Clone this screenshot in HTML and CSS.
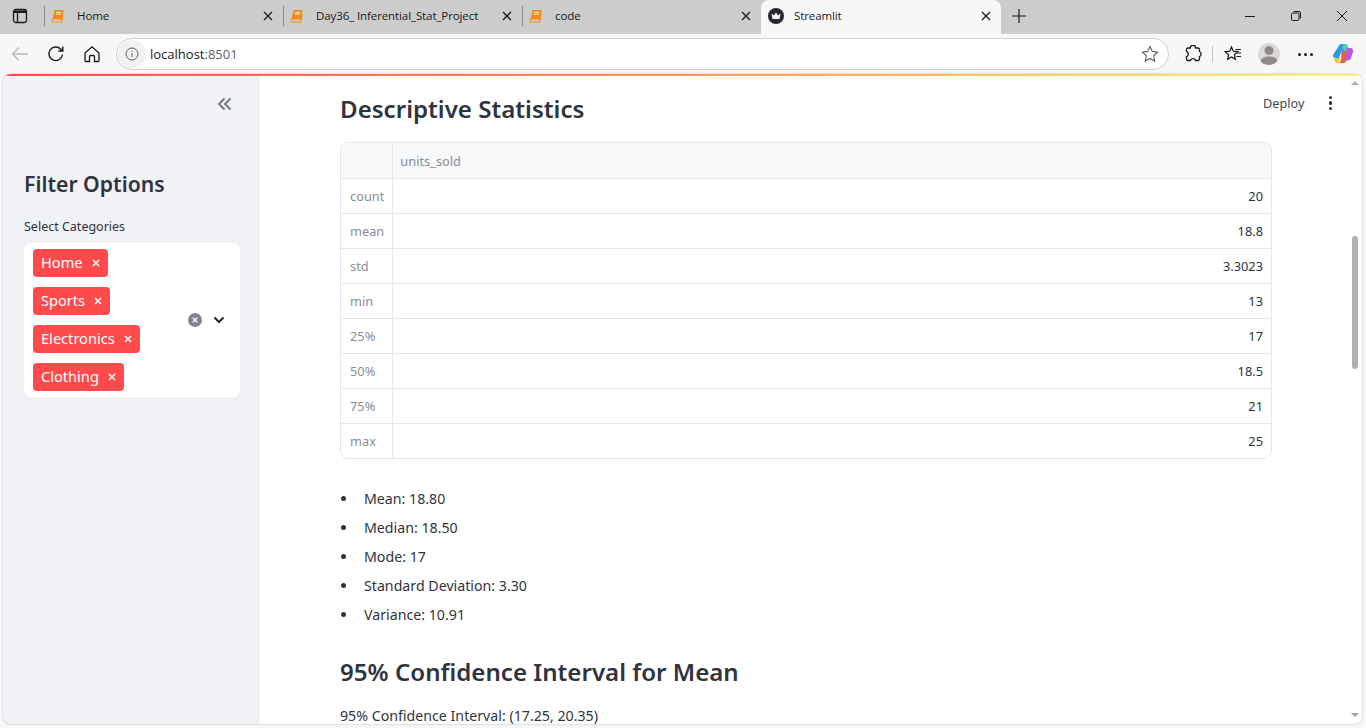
FILE: index.html
```html
<!DOCTYPE html>
<html lang="en">
<head>
    <meta charset="UTF-8">
    <meta name="viewport" content="width=device-width, initial-scale=1.0">
    <title>Streamlit</title>
    <link rel="stylesheet" href="styles.css">
</head>
<body>
    <div class="tabstrip">
        <svg class="tab-panel-icon" width="16" height="16" viewBox="0 0 16 16" fill="none" stroke="#1a1a1a" stroke-width="1.3"><rect x="1.5" y="1.5" width="13" height="13" rx="2.5"/><path d="M5.5 5v9.500"/><path d="M2 2.500h12v2.500H2z" fill="#1a1a1a" stroke="none"/></svg>
        <div class="tab">
            <svg class="book" width="14" height="14" viewBox="0 0 14 14" fill="none"><path d="M3.600 1h9.200L10.800 10.600H1.400z" fill="#f28a14"/><path d="M1.400 10.600c-.8 1.400-.2 2.400 1 2.400h8.200l1.600-7.600" stroke="#f28a14" stroke-width="1.100"/><path d="M5.200 3.400h5M4.800 5.200h5" stroke="#fff" stroke-width=".9"/></svg>
            <span class="tab-title">Home</span>
            <svg class="tab-x" width="10" height="10" viewBox="0 0 10 10" stroke="#1a1a1a" stroke-width="1.300"><path d="M1 1l8 8M9 1L1 9"/></svg>
        </div>
        <div class="tab">
            <svg class="book" width="14" height="14" viewBox="0 0 14 14" fill="none"><path d="M3.600 1h9.200L10.800 10.600H1.400z" fill="#f28a14"/><path d="M1.400 10.600c-.8 1.400-.2 2.400 1 2.400h8.200l1.600-7.600" stroke="#f28a14" stroke-width="1.100"/><path d="M5.200 3.400h5M4.800 5.200h5" stroke="#fff" stroke-width=".9"/></svg>
            <span class="tab-title">Day36_ Inferential_Stat_Project</span>
            <svg class="tab-x" width="10" height="10" viewBox="0 0 10 10" stroke="#1a1a1a" stroke-width="1.300"><path d="M1 1l8 8M9 1L1 9"/></svg>
        </div>
        <div class="tab">
            <svg class="book" width="14" height="14" viewBox="0 0 14 14" fill="none"><path d="M3.600 1h9.200L10.800 10.600H1.400z" fill="#f28a14"/><path d="M1.400 10.600c-.8 1.400-.2 2.400 1 2.400h8.200l1.600-7.600" stroke="#f28a14" stroke-width="1.100"/><path d="M5.200 3.400h5M4.800 5.200h5" stroke="#fff" stroke-width=".9"/></svg>
            <span class="tab-title">code</span>
            <svg class="tab-x" width="10" height="10" viewBox="0 0 10 10" stroke="#1a1a1a" stroke-width="1.300"><path d="M1 1l8 8M9 1L1 9"/></svg>
        </div>
        <div class="tab tab-active">
            <svg class="crown" width="16" height="16" viewBox="0 0 16 16"><circle cx="8" cy="8" r="8" fill="#262730"/><path d="M3.500 5.500l2.500 2L8 4.500l2 3 2.500-2-1 5.500h-7z" fill="#fff"/></svg>
            <span class="tab-title">Streamlit</span>
            <svg class="tab-x" width="10" height="10" viewBox="0 0 10 10" stroke="#1a1a1a" stroke-width="1.300"><path d="M1 1l8 8M9 1L1 9"/></svg>
        </div>
        <svg class="new-tab" width="16" height="16" viewBox="0 0 16 16" stroke="#1a1a1a" stroke-width="1.200"><path d="M8 1v14M1 8h14"/></svg>
        <div class="win-buttons">
            <svg width="12" height="12" viewBox="0 0 12 12" stroke="#1a1a1a" fill="none"><path d="M1 6.500h10"/></svg>
            <svg width="12" height="12" viewBox="0 0 12 12" stroke="#1a1a1a" fill="none"><rect x="1.500" y="3" width="7.500" height="7.500" rx="1.500"/><path d="M3.500 1.500h5.500a1.500 1.500 0 0 1 1.500 1.500v5.500"/></svg>
            <svg width="12" height="12" viewBox="0 0 12 12" stroke="#1a1a1a" fill="none"><path d="M1 1l10 10M11 1L1 11"/></svg>
        </div>
    </div>

    <div class="toolbar">
        <svg class="tool tool-back" width="18" height="18" viewBox="0 0 18 18" fill="none" stroke="#b9b9b9" stroke-width="1.300"><path d="M17 9H1.500M8 2.500L1.500 9 8 15.500"/></svg>
        <svg class="tool" width="18" height="18" viewBox="0 0 18 18" fill="none" stroke="#1a1a1a" stroke-width="1.400"><path d="M15.500 9.500A6.800 6.800 0 1 1 13.600 4L15.500 6"/><path d="M15.800 1.500V6h-4.500"/></svg>
        <svg class="tool" width="18" height="18" viewBox="0 0 18 18" fill="none" stroke="#1a1a1a" stroke-width="1.300"><path d="M2 8l7-6.200L16 8v7.500a1 1 0 0 1-1 1h-3.500v-5a1 1 0 0 0-1-1h-3a1 1 0 0 0-1 1v5H3a1 1 0 0 1-1-1z"/></svg>
        <div class="urlbar">
            <span class="url-info"><svg width="14" height="14" viewBox="0 0 14 14" fill="none" stroke="#5f5f5f" stroke-width="1"><circle cx="7" cy="7" r="6"/><path d="M7 6v4M7 3.800v1.100"/></svg></span>
            <span class="url-text">localhost<span class="url-port">:8501</span></span>
            <svg class="url-star" width="18" height="18" viewBox="0 0 18 18" fill="none" stroke="#5f5f5f" stroke-width="1.100"><path d="M9 1.500l2.300 4.900 5.300.7-3.900 3.700 1 5.300L9 13.500l-4.700 2.600 1-5.300-3.900-3.700 5.300-.7z"/></svg>
        </div>
        <svg class="tool tool-ext" width="18" height="18" viewBox="0 0 18 18" fill="none" stroke="#1a1a1a" stroke-width="1.300"><path d="M6.300 3a2.700 2.700 0 0 1 5.400 0H14a1.500 1.500 0 0 1 1.500 1.500v2a2.700 2.700 0 0 1 0 5V14a1.500 1.500 0 0 1-1.500 1.500h-2.500a2.600 2.600 0 0 0-5 0H4A1.500 1.500 0 0 1 2.500 14v-2.500a2.600 2.600 0 0 0 0-5v-2A1.500 1.500 0 0 1 4 3z"/></svg>
        <span class="tool-sep"></span>
        <svg class="tool tool-fav" width="18" height="18" viewBox="0 0 18 18" fill="none" stroke="#1a1a1a" stroke-width="1.200"><path d="M7.500 2l1.800 4.200 4.500.5-3.400 3 1 4.600-3.900-2.400-3.900 2.400 1-4.600-3.400-3 4.500-.5z"/><path d="M11.500 4.500H17M13.500 8H17M12.500 11.500H17"/></svg>
        <span class="avatar"><svg width="22" height="22" viewBox="0 0 22 22" fill="#8f8b87"><circle cx="11" cy="7.500" r="4.500"/><path d="M2.500 19c0-3.500 3.500-5.500 8.500-5.500s8.500 2 8.500 5.500c-2 1.800-5 3-8.500 3s-6.500-1.200-8.500-3z"/></svg></span>
        <span class="more-dots"><i></i><i></i><i></i></span>
        <svg class="copilot" width="22" height="22" viewBox="0 0 22 22">
            <path d="M8 1h5c1.500 0 2.400 1 2.800 2.400L17 8H9.500L7 15H3.500C1.500 15 .5 13.500 1 12z" fill="#2b9de8"/>
            <path d="M13 1c1.500 0 2.400 1 2.800 2.400L17 8h-5L10.500 4C10 2.500 11.500 1 13 1z" fill="#4fd0b0"/>
            <path d="M9.500 8H17l-2.500 9c-.5 1.800-1.500 3-3.500 3H6c2 0 2.500-1.500 3-3z" fill="#f0642c"/>
            <path d="M14.500 5h4c2 0 3.200 1.800 2.600 3.800L19 15c-.5 1.500-1.500 2.500-3.500 2.500H12l2-6z" fill="#b45ce0"/>
            <path d="M3 15h5l-1.500 4.500c-.2.400-.6.500-1 .5C3 20 1.500 17.500 3 15z" fill="#f2c230"/>
        </svg>
    </div>

    <div class="viewport">
        <div class="page">
            <aside class="sidebar">
                <div class="collapse-row">
                    <svg width="15" height="14" viewBox="0 0 15 14" fill="none" stroke="#6f7380" stroke-width="1.800"><path d="M7.500 1.500L2 7l5.500 5.500M13.500 1.500L8 7l5.500 5.500"/></svg>
                </div>
                <h2 class="side-title">Filter Options</h2>
                <label class="field-label">Select Categories</label>
                <div class="multiselect">
                    <div class="chips">
                        <span class="chip">Home<svg class="chip-x" width="8" height="8" viewBox="0 0 8 8" stroke="#fff" stroke-width="1.500"><path d="M1 1l6 6M7 1L1 7"/></svg></span>
                        <span class="chip">Sports<svg class="chip-x" width="8" height="8" viewBox="0 0 8 8" stroke="#fff" stroke-width="1.500"><path d="M1 1l6 6M7 1L1 7"/></svg></span>
                        <span class="chip">Electronics<svg class="chip-x" width="8" height="8" viewBox="0 0 8 8" stroke="#fff" stroke-width="1.500"><path d="M1 1l6 6M7 1L1 7"/></svg></span>
                        <span class="chip">Clothing<svg class="chip-x" width="8" height="8" viewBox="0 0 8 8" stroke="#fff" stroke-width="1.500"><path d="M1 1l6 6M7 1L1 7"/></svg></span>
                    </div>
                    <div class="select-icons">
                        <svg width="14" height="14" viewBox="0 0 14 14"><circle cx="7" cy="7" r="7" fill="#84868f"/><path d="M4.800 4.800l4.400 4.400M9.200 4.800l-4.400 4.400" stroke="#fff" stroke-width="1.300"/></svg>
                        <svg width="12" height="8" viewBox="0 0 12 8" fill="none" stroke="#262730" stroke-width="2"><path d="M1.500 1.500L6 6l4.500-4.500"/></svg>
                    </div>
                </div>
            </aside>

            <main class="main">
                <div class="top-actions">
                    <span class="deploy">Deploy</span>
                    <span class="kebab"><i></i><i></i><i></i></span>
                </div>
                <div class="content">
                    <h2 class="heading">Descriptive Statistics</h2>
                    <div class="table-wrap">
                        <table class="stats">
                            <thead><tr><th class="idx"></th><th class="col">units_sold</th></tr></thead>
                            <tbody>
                                <tr><td class="idx">count</td><td>20</td></tr>
                                <tr><td class="idx">mean</td><td>18.8</td></tr>
                                <tr><td class="idx">std</td><td>3.3023</td></tr>
                                <tr><td class="idx">min</td><td>13</td></tr>
                                <tr><td class="idx">25%</td><td>17</td></tr>
                                <tr><td class="idx">50%</td><td>18.5</td></tr>
                                <tr><td class="idx">75%</td><td>21</td></tr>
                                <tr><td class="idx">max</td><td>25</td></tr>
                            </tbody>
                        </table>
                    </div>
                    <ul class="summary">
                        <li>Mean: 18.80</li>
                        <li>Median: 18.50</li>
                        <li>Mode: 17</li>
                        <li>Standard Deviation: 3.30</li>
                        <li>Variance: 10.91</li>
                    </ul>
                    <h2 class="heading heading-ci">95% Confidence Interval for Mean</h2>
                    <p class="ci-text">95% Confidence Interval: (17.25, 20.35)</p>
                </div>
                <div class="scrollbar"><span class="scroll-up"></span><span class="scroll-thumb"></span><span class="scroll-down"></span></div>
            </main>
        </div>
    </div>
</body>
</html>
```
FILE: styles.css
```css
* {
    box-sizing: border-box;
}
html, body {
    margin: 0;
    height: 728px;
    overflow: hidden;
}
body {
    font-family: "Noto Sans", sans-serif;
    background-color: #f7f7f7;
    color: #31333f;
}

/* browser chrome */
.tabstrip {
    height: 34px;
    background-color: #cccccc;
    display: flex;
    align-items: center;
    font-family: "Open Sans", sans-serif;
    font-size: 11.5px;
    letter-spacing: -0.1px;
    color: #1a1a1a;
}
.tab-panel-icon {
    margin: 0 16px 2px 12px;
    flex: none;
}
.tab {
    width: 239px;
    height: 34px;
    display: flex;
    align-items: center;
    padding: 0 10px 2px 7px;
    flex: none;
    position: relative;
}
.tab::before {
    content: "";
    position: absolute;
    left: 0;
    top: 6px;
    height: 20px;
    border-left: 1px solid #8a8a8a;
}
.tab .book {
    margin-right: 12px;
    flex: none;
}
.tab-title {
    flex: 1;
    white-space: nowrap;
    margin-bottom: 1px;
}
.tab-x {
    flex: none;
}
.tab-active {
    background-color: #f7f7f7;
    border-radius: 8px 8px 0 0;
    width: 240px;
}
.tab-active::before {
    display: none;
}
.tab-active .crown {
    margin-right: 10px;
}
.new-tab {
    margin: 0 0 2px 10px;
    flex: none;
}
.win-buttons {
    margin: 0 0 2px auto;
    display: flex;
    gap: 34px;
    padding-right: 18px;
}

.toolbar {
    height: 40px;
    display: flex;
    align-items: center;
    background-color: #f7f7f7;
    padding-left: 11px;
}
.tool {
    flex: none;
    margin-right: 18px;
}
.urlbar {
    width: 1053px;
    height: 32px;
    background-color: #fff;
    border: 1px solid #d0d0d0;
    border-radius: 16px;
    display: flex;
    align-items: center;
    margin-left: -3px;
    padding: 0 9px 0 1px;
    font-family: "Open Sans", sans-serif;
    font-size: 13px;
    color: #1a1a1a;
}
.url-info {
    width: 28px;
    height: 28px;
    border-radius: 50%;
    background-color: #f1f1f1;
    display: flex;
    align-items: center;
    justify-content: center;
    margin-right: 4px;
}
.url-port {
    color: #5f6368;
}
.url-star {
    margin-left: auto;
}
.tool-ext {
    margin: 0 0 0 15px;
}
.tool-sep {
    width: 1px;
    height: 16px;
    background-color: #c4c4c4;
    margin: 0 11px 0 10px;
}
.tool-fav {
    margin: 0;
}
.avatar {
    width: 22px;
    height: 22px;
    border-radius: 50%;
    background-color: #dcdad7;
    margin-left: 16px;
    overflow: hidden;
}
.avatar svg {
    display: block;
}
.more-dots {
    display: flex;
    gap: 3px;
    margin-left: 18px;
}
.more-dots i {
    width: 3px;
    height: 3px;
    border-radius: 50%;
    background-color: #1a1a1a;
}
.copilot {
    margin-left: 19px;
}

/* page */
.viewport {
    height: 650px;
    margin: 0 4px 4px 3px;
    padding-top: 2px;
    border-radius: 8px;
    background: linear-gradient(90deg, #ff4b4b, #ff8f5a 45%, #ffd166 80%, #fff27a);
    box-shadow: 0 0 2px rgba(0, 0, 0, 0.3);
    overflow: hidden;
}
.page {
    height: 648px;
    display: flex;
    background-color: #fff;
}
.sidebar {
    width: 257px;
    flex: none;
    background-color: #f0f2f6;
    padding: 0 20px 0 21px;
}
.collapse-row {
    height: 56px;
    display: flex;
    justify-content: flex-end;
    padding: 21px 8px 0 0;
}
.side-title {
    font-size: 21.2px;
    font-weight: 600;
    line-height: 32px;
    margin: 36px 0 0;
}
.field-label {
    display: block;
    font-size: 12.5px;
    line-height: 18px;
    margin: 18px 0 0;
}
.multiselect {
    margin-top: 7px;
    background-color: #fff;
    border-radius: 8px;
    height: 154px;
    display: flex;
    align-items: center;
    padding: 6px 15px 6px 9px;
}
.chips {
    flex: 1;
    display: flex;
    flex-direction: column;
    align-items: flex-start;
    gap: 10px;
}
.chip {
    height: 28px;
    display: flex;
    align-items: center;
    background-color: #ff4b4b;
    color: #fff;
    border-radius: 4px;
    padding: 0 8px 2px;
    font-size: 14.6px;
    white-space: nowrap;
}
.chip-x {
    margin: 2px 0 0 9px;
    flex: none;
}
.select-icons {
    display: flex;
    align-items: center;
    gap: 11px;
}

.main {
    flex: 1;
    position: relative;
    overflow: hidden;
}
.top-actions {
    position: absolute;
    top: 18px;
    right: 30px;
    display: flex;
    align-items: center;
    gap: 24px;
    font-size: 12.7px;
    color: #44464f;
}
.kebab {
    display: flex;
    flex-direction: column;
    gap: 2px;
}
.kebab i {
    width: 3.5px;
    height: 3.5px;
    border-radius: 50%;
    background-color: #31333f;
}
.content {
    padding: 15px 90px 0 80px;
}
.heading {
    font-size: 24.1px;
    font-weight: 600;
    line-height: 36px;
    margin: 0;
}
.table-wrap {
    margin-top: 15px;
    border: 1px solid #e6e7eb;
    border-radius: 8px;
    overflow: hidden;
}
.stats {
    width: 100%;
    border-collapse: collapse;
    font-size: 12.8px;
}
.stats th, .stats td {
    height: 35px;
    padding: 0 8px;
    border-bottom: 1px solid #e6e7eb;
    font-weight: 400;
    text-align: right;
}
.stats tr:last-child td {
    border-bottom: none;
}
.stats th {
    background-color: #f7f8fa;
    color: #8b8d97;
    text-align: left;
    padding-top: 1px;
}
.stats .col {
    padding-left: 7px;
}
.stats .idx {
    width: 49px;
    padding-left: 9px;
    color: #8b8d97;
    text-align: left;
    border-right: 1px solid #e6e7eb;
}
.stats th.idx {
    background-color: #f7f8fa;
}
.summary {
    margin: 28px 0 0;
    padding: 0;
    list-style: none;
    font-size: 14.2px;
    line-height: 23px;
}
.summary li {
    display: flex;
    align-items: center;
    margin-bottom: 6px;
}
.summary li::before {
    content: "";
    width: 5px;
    height: 5px;
    margin: 0 18px 0 1px;
    border-radius: 50%;
    background-color: #31333f;
}
.heading-ci {
    margin-top: 28px;
}
.ci-text {
    font-size: 14.2px;
    line-height: 24px;
    margin: 14px 0 0;
}
.scrollbar {
    position: absolute;
    top: 0;
    right: 0;
    bottom: 0;
    width: 14px;
    display: flex;
    flex-direction: column;
    padding: 5px 0 7px;
}
.scroll-up, .scroll-down {
    display: block;
    width: 0;
    margin-left: 3px;
    border-left: 4px solid transparent;
    border-right: 4px solid transparent;
}
.scroll-up {
    border-bottom: 4px solid #b0b0b4;
}
.scroll-down {
    margin-top: auto;
    border-top: 4px solid #a0a0a4;
}
.scroll-thumb {
    display: block;
    width: 6px;
    height: 133px;
    margin: 151px 0 0 4px;
    background-color: #b0b0b4;
    border-radius: 3px;
}
```
